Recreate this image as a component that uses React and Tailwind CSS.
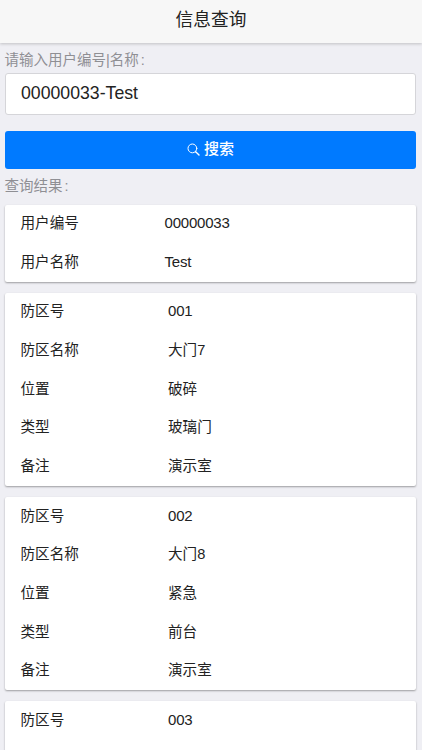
import React from 'react'

const user = [
  { label: '用户编号', value: '00000033' },
  { label: '用户名称', value: 'Test' },
]

const zones = [
  {
    no: '001',
    rows: [
      { label: '防区名称', value: '大门7' },
      { label: '位置', value: '破碎' },
      { label: '类型', value: '玻璃门' },
      { label: '备注', value: '演示室' },
    ],
  },
  {
    no: '002',
    rows: [
      { label: '防区名称', value: '大门8' },
      { label: '位置', value: '紧急' },
      { label: '类型', value: '前台' },
      { label: '备注', value: '演示室' },
    ],
  },
  { no: '003', rows: [] },
]

function SearchIcon() {
  return (
    <svg className="w-[13px] h-[13px] mr-1" viewBox="0 0 13 13" fill="none" stroke="currentColor" strokeLinecap="round">
      <circle cx="5.4" cy="5.4" r="4.4" strokeWidth="1" />
      <path d="M8.7 8.7L12 12" strokeWidth="1.4" />
    </svg>
  )
}

function Row({ label, value, labelClass, valueClass }) {
  return (
    <div className="flex items-center h-[38.7px] pl-[15.5px] pb-[1.3px]">
      <div className={labelClass}>{label}</div>
      <div className={valueClass}>{value}</div>
    </div>
  )
}

function Card({ children }) {
  return (
    <div className="bg-white rounded-[2px] ml-[5px] w-[411px] mb-[10.8px] shadow-[0_1px_2px_rgba(0,0,0,0.35)]">
      {children}
    </div>
  )
}

function App() {
  return (
    <div className="h-[750px] overflow-hidden bg-[#efeff4] text-[14.6px] leading-[20px] text-[#222] font-['Liberation_Sans','Noto_Sans_CJK_SC',sans-serif]">
      <header className="h-[43px] pb-[3px] flex items-center justify-center bg-[#f7f7f7] text-[17.7px] shadow-[0_1px_3px_rgba(0,0,0,0.2)]">
        <h1>信息查询</h1>
      </header>

      <div className="h-[30px] pt-[7px] pl-[4.5px] text-[14.5px] text-[#8f8f94]">
        请输入用户编号|名称<span className="ml-[2px]">:</span>
      </div>
      <input
        className="block w-[411px] h-[42px] ml-[5px] pl-[15px] pb-[2px] bg-white border border-[#d5d5d9] rounded-[3px] text-[17.7px] outline-none"
        defaultValue="00000033-Test"
      />
      <button className="flex items-center justify-center w-[411px] h-[38px] ml-[5px] mt-4 pb-[2px] bg-[#007aff] rounded-[3px] text-white text-[15px] font-medium">
        <SearchIcon />
        搜索
      </button>
      <div className="h-[35.5px] pt-[7px] pl-[4.5px] text-[14.5px] text-[#8f8f94]">
        查询结果<span className="ml-[2px]">:</span>
      </div>

      <Card>
        {user.map((item) => (
          <Row
            key={item.label}
            label={item.label}
            value={item.value}
            labelClass="w-[144px]"
            valueClass="text-[15px] tracking-[-0.2px]"
          />
        ))}
      </Card>
      {zones.map((zone) => (
        <Card key={zone.no}>
          <Row
            label="防区号"
            value={zone.no}
            labelClass="w-[147.5px]"
            valueClass="text-[15px] tracking-[-0.2px]"
          />
          {zone.rows.map((row) => (
            <Row key={row.label} label={row.label} value={row.value} labelClass="w-[147.5px]" />
          ))}
          {/* keeps the card running past the fold */}
          {zone.rows.length === 0 && <div className="h-[155px]" />}
        </Card>
      ))}
    </div>
  )
}

export default App
